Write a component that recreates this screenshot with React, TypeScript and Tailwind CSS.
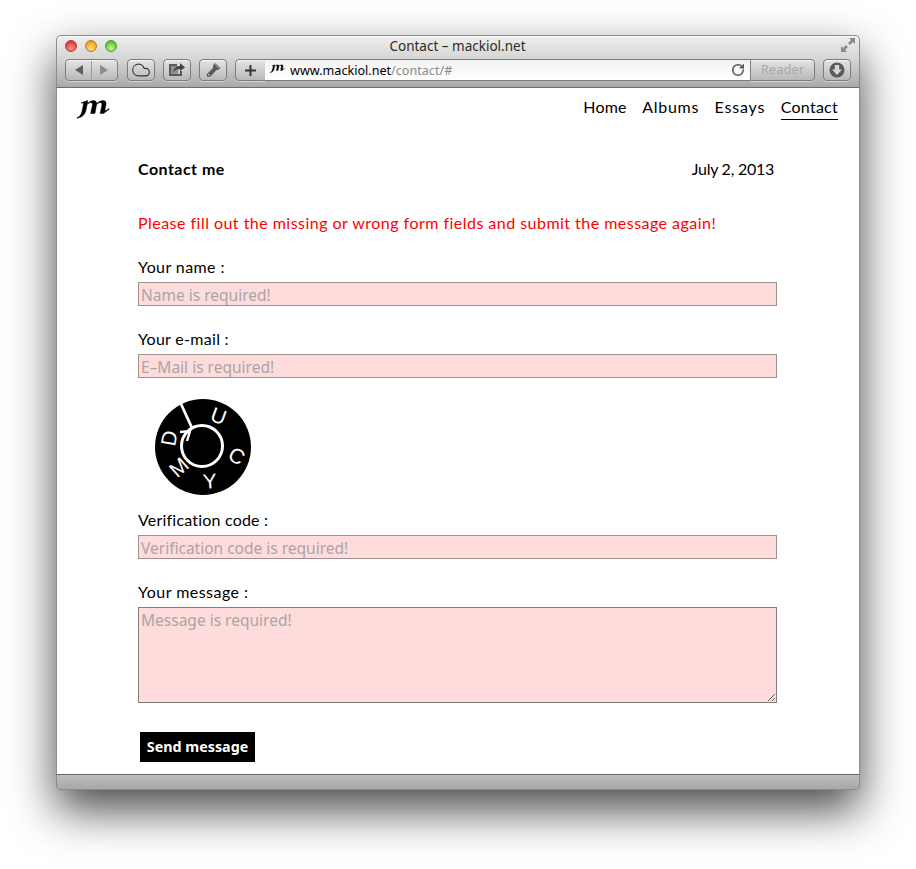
import { Cloud, RotateCw } from 'lucide-react';

const btn =
  'h-[22px] rounded-[4px] border border-[#7d7d7d] bg-gradient-to-b from-[#e4e4e4] to-[#b9b9b9] shadow-[inset_0_1px_0_#f4f4f4,0_1px_0_rgba(255,255,255,0.4)] flex items-center justify-center';

const inputCls =
  'block mt-[5px] w-[639px] h-6 border border-[#a08f8f] bg-[#fedcdc] px-[2px] pt-[1px] text-[15.5px] leading-[22px] tracking-normal font-["Noto_Sans",sans-serif] placeholder:text-[#aaa5a5] outline-none';

function Logo({ className }: { className: string }) {
  return (
    <svg viewBox="0 0 33 20" className={className} fill="currentColor" stroke="currentColor" strokeWidth="0.5">
      <path d="M0 18.5 C3 18 4.5 15 5.3 11 L6.5 5 C6.7 4 6 3.6 4.5 4.3 L4.3 3.7 L10.8 1.5 L10.3 4.6 C12.5 2.6 14.5 1.6 16.5 1.6 C18.7 1.6 19.6 2.8 19.6 4.6 C21.8 2.6 24 1.6 26 1.6 C28.5 1.6 29.3 3.3 29 5.2 L28 10.5 C27.9 11.6 28.5 11.8 29.5 11.2 L32 9.6 L32.3 10.2 L26.6 14.4 L23.2 14.4 L24.8 6.2 C25.1 4.4 24.5 3.6 23.3 3.6 C22 3.6 20.8 4.4 19.6 5.6 L17.9 14.4 L13.6 14.4 L15.4 6.2 C15.7 4.4 15.1 3.6 13.9 3.6 C12.7 3.6 11.3 4.4 10.1 5.6 L9 11 C8.2 15.5 4.8 18.6 0.2 19.2 Z" />
    </svg>
  );
}

function Captcha() {
  const letters = [
    { t: 'U', x: 64, y: 17, r: 20 },
    { t: 'C', x: 82, y: 57, r: 30 },
    { t: 'Y', x: 55, y: 82, r: -5 },
    { t: 'M', x: 24, y: 68, r: -42 },
    { t: 'D', x: 14, y: 39, r: -80 },
  ];
  return (
    <svg viewBox="0 0 96 96" className="w-24 h-24 ml-[17px]">
      <circle cx="48" cy="48" r="48" fill="#000" />
      <circle cx="47" cy="47" r="20.5" fill="none" stroke="#fff" strokeWidth="3" />
      <path d="M26 5 L37 29" stroke="#fff" strokeWidth="2.8" fill="none" />
      <path d="M25 33 L35 32 L32 42" stroke="#fff" strokeWidth="2.4" fill="none" />
      {letters.map((l) => (
        <text
          key={l.t}
          x={l.x}
          y={l.y}
          fill="#fff"
          fontSize="21"
          fontFamily="Liberation Sans, sans-serif"
          textAnchor="middle"
          dominantBaseline="central"
          transform={`rotate(${l.r} ${l.x} ${l.y})`}
        >
          {l.t}
        </text>
      ))}
    </svg>
  );
}

export default function App() {
  return (
    <div className="bg-white w-[916px] h-[869px] overflow-hidden pt-[35px] pl-[56px] font-['Lato',sans-serif] text-black">
      <div className="w-[804px] h-[755px] flex flex-col rounded-t-[5px] rounded-b-[4px] shadow-[0_20px_46px_rgba(0,0,0,0.72)]">
        {/* title bar + toolbar */}
        <div className="h-[53px] shrink-0 rounded-t-[5px] border border-[#8c8c8c] border-b-[#6e6e6e] bg-gradient-to-b from-[#efefef] via-[#d2d2d2] to-[#a9a9a9] shadow-[inset_0_1px_0_#fafafa] px-2">
          <div className="h-[23px] flex items-center relative pb-1">
            <div className="flex gap-2 items-center">
              <span className="w-3 h-3 rounded-full border border-[#a5413d] bg-[radial-gradient(circle_at_50%_75%,#ff9a8f,#e9413a_65%,#b8302c)]" />
              <span className="w-3 h-3 rounded-full border border-[#b0812c] bg-[radial-gradient(circle_at_50%_75%,#ffe08a,#f5a623_65%,#c9861f)]" />
              <span className="w-3 h-3 rounded-full border border-[#5c9339] bg-[radial-gradient(circle_at_50%_75%,#c8f59a,#66c63f_65%,#4a9a2e)]" />
            </div>
            <span className="flex-1 text-center text-[13.5px] leading-none text-[#2b2b2b] font-['Noto_Sans',sans-serif] pr-[53px] pt-[3px]">
              Contact – mackiol.net
            </span>
            <svg viewBox="0 0 14 14" className="absolute right-[-4px] top-[2px] w-[14px] h-[14px]" fill="#8a8a8a">
              <path d="M8 0h6v6l-2-2-3 3-2-2 3-3zM6 14H0V8l2 2 3-3 2 2-3 3z" />
            </svg>
          </div>
          <div className="flex items-center">
            <div className={`${btn} w-[53px]`}>
              <svg viewBox="0 0 10 10" className="w-[10px] h-[10px] mr-[7px]" fill="#5f5f5f"><path d="M9 0v10L1 5z" /></svg>
              <span className="w-px h-[18px] bg-[#9c9c9c]" />
              <svg viewBox="0 0 10 10" className="w-[10px] h-[10px] ml-[7px]" fill="#8d8d8d"><path d="M1 0v10l8-5z" /></svg>
            </div>
            <div className={`${btn} w-[28px] ml-[9px]`}>
              <Cloud size={20} strokeWidth={1.4} className="text-[#333]" />
            </div>
            <div className={`${btn} w-[28px] ml-2`}>
              <svg viewBox="0 0 18 16" className="w-[18px] h-4" fill="none">
                <path d="M2 4h8v9H2z" fill="#8f8f8f" />
                <path d="M9 3H2v10h11V9" stroke="#5a5a5a" strokeWidth="2" />
                <path d="M5 10c1-4 4-6 7-6V1l5 4.5L12 9V7c-3 0-5 1-7 3z" fill="#444" />
              </svg>
            </div>
            <div className={`${btn} w-[28px] ml-2`}>
              <svg viewBox="0 0 16 16" className="w-4 h-4" fill="#5a5a5a">
                <path d="M10 1 L15.5 6 L13 8 L11.5 8 L5.5 14.5 L2.5 15 L1.5 12.5 L8 6 L8 3.5 Z" />
                <path d="M10 2.5 L14 6" stroke="#cfcfcf" strokeWidth="0.8" />
                <circle cx="3.8" cy="12.8" r="0.8" fill="#ddd" />
              </svg>
            </div>
            <div className={`${btn} w-[31px] ml-2 rounded-r-none`}>
              <svg viewBox="0 0 11 11" className="w-[11px] h-[11px]" fill="#333"><path d="M4.5 0h2v4.5H11v2H6.5V11h-2V6.5H0v-2h4.5z" /></svg>
            </div>
            <div className="h-[22px] w-[485px] -ml-px border-y border-[#7d7d7d] bg-gradient-to-b from-[#f2f2f2] to-white flex items-center font-['Noto_Sans',sans-serif] text-[12.6px] pl-[5px]">
              <Logo className="w-[15px] h-[9px] text-black mb-[3px]" />
              <span className="ml-[5px] pt-[3px] text-black">www.mackiol.net</span>
              <span className="pt-[3px] text-[#8b8b8b]">/contact/#</span>
              <RotateCw size={14} strokeWidth={2.6} className="ml-auto mr-[5px] text-[#555]" />
            </div>
            <div className={`${btn} w-[65px] rounded-l-none text-[13px] text-[#a8a8a8] font-['Noto_Sans',sans-serif]`}>Reader</div>
            <div className={`${btn} w-[28px] ml-2`}>
              <svg viewBox="0 0 16 16" className="w-4 h-4">
                <circle cx="8" cy="8" r="7.5" fill="#5a5a5a" />
                <path d="M5.8 3h4.4v4.5H13L8 13 3 7.5h2.8z" fill="#d8d8d8" />
              </svg>
            </div>
          </div>
        </div>

        {/* page */}
        <div className="flex-1 min-h-0 bg-white border-x border-[#8c8c8c] overflow-hidden tracking-[0.47px]">
          <div className="flex justify-between items-start pl-5 pr-[21px] pt-[11px] h-[60px]">
            <Logo className="w-[33px] h-5 text-black" />
            <nav className="flex gap-[15.6px] text-[16px] leading-5 -mt-[2px]">
              <a className="tracking-[0.2px]">Home</a>
              <a className="tracking-[0.7px]">Albums</a>
              <a className="tracking-[0.8px]">Essays</a>
              <a className="tracking-[0.25px] border-b border-black pb-[1px] h-[23px]">Contact</a>
            </nav>
          </div>
          <div className="pl-[81px]">
            <div className="flex justify-between w-[636px] h-5 text-[16px] leading-5 mt-[11px]">
              <b>Contact me</b>
              <span className="tracking-[-0.25px]">July 2, 2013</span>
            </div>
            <p className="mt-[34px] text-[16px] leading-5 text-[#ff0000]">
              Please fill out the missing or wrong form fields and submit the message again!
            </p>
            <form>
              <label className="block mt-6 text-[16px] leading-5 tracking-[0.4px]">Your name :</label>
              <input className={inputCls} placeholder="Name is required!" />
              <label className="block mt-[23px] text-[16px] leading-5 tracking-[0.3px]">Your e-mail :</label>
              <input className={inputCls} placeholder="E–Mail is required!" />
              <div className="mt-[21px]"><Captcha /></div>
              <label className="block mt-[15px] text-[16px] leading-5 tracking-[0.2px]">Verification code :</label>
              <input className={inputCls} placeholder="Verification code is required!" />
              <label className="block mt-[23px] text-[16px] leading-5">Your message :</label>
              <textarea
                className="block mt-[5px] w-[639px] h-24 border border-[#7f7f7f] bg-[#fedcdc] px-[2px] pt-[1px] text-[15.5px] leading-[22px] tracking-normal font-['Noto_Sans',sans-serif] placeholder:text-[#aaa5a5] outline-none"
                placeholder="Message is required!"
              />
              <button
                type="button"
                className="block mt-[29px] ml-[2px] w-[115px] h-[30px] bg-black text-white text-[14.3px] tracking-normal font-bold font-['Noto_Sans',sans-serif]"
              >
                Send message
              </button>
            </form>
          </div>
        </div>

        {/* bottom bar */}
        <div className="h-4 shrink-0 rounded-b-[4px] border border-[#8c8c8c] border-t-[#666] bg-gradient-to-b from-[#bdbdbd] to-[#a8a8a8]" />
      </div>
    </div>
  );
}
